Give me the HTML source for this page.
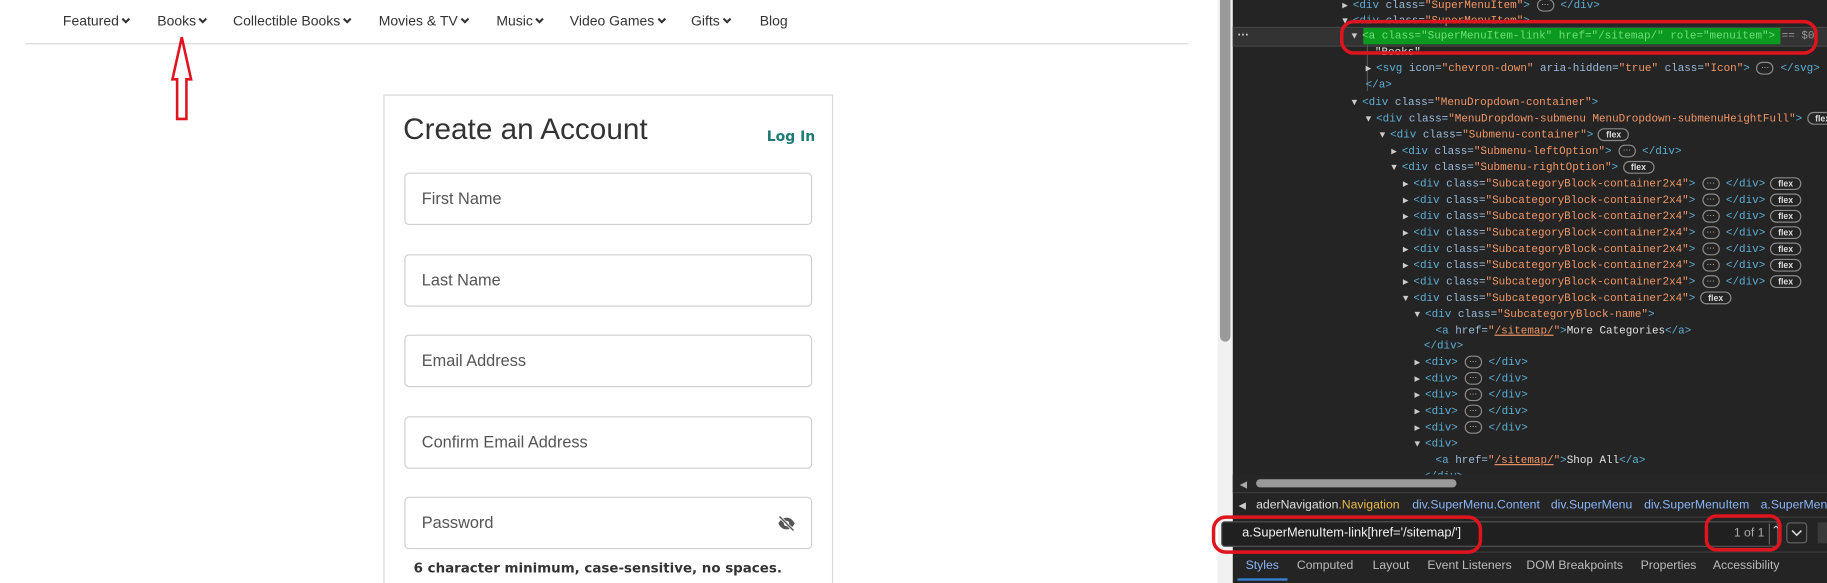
<!DOCTYPE html>
<html><head><meta charset="utf-8"><style>
html,body{margin:0;padding:0;}
body{width:1827px;height:583px;overflow:hidden;background:#fff;position:relative;}
#w{position:absolute;left:0;top:0;width:1568px;height:500px;transform:scale(1.1652,1.166);transform-origin:0 0;overflow:hidden;font-family:"Liberation Sans",sans-serif;}
.a{position:absolute;white-space:nowrap;}
.nav{font-size:12px;color:#333;top:11px;}
.nav svg{vertical-align:middle;margin-left:2px;margin-top:-2px}
.inp{position:absolute;left:347px;width:350px;height:45px;border:1px solid #cfcfcf;border-radius:4px;box-sizing:border-box;}
.inp span{position:absolute;left:14px;top:13px;font-size:14px;color:#555;}
#dt{position:absolute;left:1058px;top:0;width:510px;height:500px;background:#242424;}
.r{position:absolute;font-family:"Liberation Mono",monospace;font-size:9.4px;color:#9bbbdc;white-space:nowrap;line-height:12px;}
.t{color:#5db0d7}.n{color:#9bbbdc}.v{color:#f29766}.w{color:#e0e0e0}
.tri{display:inline-block;width:9px;color:#ccc;font-size:8px;}
.p{display:inline-block;border:1px solid #8a8a8a;border-radius:6px;font-size:7px;line-height:7px;padding:1px 3px;color:#ddd;vertical-align:1px;font-family:"Liberation Sans",sans-serif;}
.fx{display:inline-block;border:1px solid #8a8a8a;border-radius:7px;font-size:7.5px;line-height:9px;padding:0 6px;color:#ddd;margin-left:4px;font-family:"Liberation Sans",sans-serif;font-weight:bold}
.u{text-decoration:underline;color:#f29766}
.tab{position:absolute;top:479px;font-size:10.5px;color:#bbb;white-space:nowrap}
.bc{position:absolute;top:427px;font-size:10.5px;color:#8ab4f8;white-space:nowrap}
</style></head><body><div id="w">
<!-- nav -->
<div class="a nav" style="left:54px">Featured<svg width="8" height="6" viewBox="0 0 8 6"><path d="M1 1l3 3 3-3" stroke="#333" stroke-width="1.8" fill="none"/></svg></div>
<div class="a nav" style="left:135px">Books<svg width="8" height="6" viewBox="0 0 8 6"><path d="M1 1l3 3 3-3" stroke="#333" stroke-width="1.8" fill="none"/></svg></div>
<div class="a nav" style="left:200px">Collectible Books<svg width="8" height="6" viewBox="0 0 8 6"><path d="M1 1l3 3 3-3" stroke="#333" stroke-width="1.8" fill="none"/></svg></div>
<div class="a nav" style="left:325px">Movies &amp; TV<svg width="8" height="6" viewBox="0 0 8 6"><path d="M1 1l3 3 3-3" stroke="#333" stroke-width="1.8" fill="none"/></svg></div>
<div class="a nav" style="left:426px">Music<svg width="8" height="6" viewBox="0 0 8 6"><path d="M1 1l3 3 3-3" stroke="#333" stroke-width="1.8" fill="none"/></svg></div>
<div class="a nav" style="left:489px">Video Games<svg width="8" height="6" viewBox="0 0 8 6"><path d="M1 1l3 3 3-3" stroke="#333" stroke-width="1.8" fill="none"/></svg></div>
<div class="a nav" style="left:593px">Gifts<svg width="8" height="6" viewBox="0 0 8 6"><path d="M1 1l3 3 3-3" stroke="#333" stroke-width="1.8" fill="none"/></svg></div>
<div class="a nav" style="left:652px">Blog</div>
<div class="a" style="left:22px;top:37px;width:998px;height:1px;background:#d8d8d8"></div>
<svg class="a" style="left:144px;top:30px" width="24" height="76" viewBox="0 0 24 76"><path d="M12 2L20 38H16V72H8V38H4Z" fill="none" stroke="#e0141e" stroke-width="2.2"/></svg>
<!-- card -->
<div class="a" style="left:329px;top:81px;width:386px;height:430px;border:1px solid #d8d8d8;box-sizing:border-box"></div>
<div class="a" style="left:346px;top:97px;font-size:25.5px;color:#333">Create an Account</div>
<div class="a" style="left:658px;top:110px;font-size:12px;font-weight:bold;color:#1f7a74;font-family:'DejaVu Sans',sans-serif">Log In</div>
<div class="inp" style="top:148px"><span>First Name</span></div>
<div class="inp" style="top:218px"><span>Last Name</span></div>
<div class="inp" style="top:287px"><span>Email Address</span></div>
<div class="inp" style="top:357px"><span>Confirm Email Address</span></div>
<div class="inp" style="top:426px"><span>Password</span>
<svg style="position:absolute;left:319px;top:15px" width="16" height="14" viewBox="0 0 16 14"><path d="M1 7C3 3 5.5 2 8 2s5 1 7 5c-2 4-4.5 5-7 5S3 11 1 7z" fill="#555"/><circle cx="8" cy="7" r="2.3" fill="#fff"/><path d="M2 1l12 12" stroke="#fff" stroke-width="2.5"/><path d="M2 1l12 12" stroke="#555" stroke-width="1.2"/></svg></div>
<div class="a" style="left:355px;top:480px;font-size:11.5px;font-weight:bold;color:#333;font-family:'DejaVu Sans',sans-serif">6 character minimum, case-sensitive, no spaces.</div>
<div class="a" style="left:420px;top:499px;font-size:11px;color:#555">must contain at least one letter and one number or symbol of</div>
<!-- page scrollbar -->
<div class="a" style="left:1045px;top:0;width:13px;height:500px;background:#f1f1f1"></div>
<div class="a" style="left:1047px;top:0;width:9px;height:293px;background:#9a9a9a;border-radius:0 0 5px 5px"></div>
<!-- devtools -->
<div id="dt">
<div class="a" style="left:0;top:23px;width:510px;height:15px;background:#333;border-top:1px solid #444;border-bottom:1px solid #444"></div>
<div class="a" style="left:4px;top:25px;color:#ccc;font-size:10px;font-weight:bold">···</div>
<div class="a" style="left:112px;top:24px;width:358px;height:14px;background:#0b9a1f"></div>
<div class="a" style="left:115px;top:38px;width:1px;height:40px;background:#555"></div>

<div class="r" style="left:94px;top:-1px"><span class="tri">▶</span><span class="t">&lt;div </span>class=<span class="v">"SuperMenuItem"</span><span class="t">&gt;</span> <span class="p">···</span> <span class="t">&lt;/div&gt;</span></div>
<div class="r" style="left:94px;top:12px"><span class="tri">▼</span><span class="t">&lt;div </span>class=<span class="v">"SuperMenuItem"</span><span class="t">&gt;</span></div>
<div class="r" style="left:102px;top:25px"><span class="tri">▼</span><span style="color:#6fe07a">&lt;a class="SuperMenuItem-link" href="/sitemap/" role="menuitem"&gt;</span> <span style="color:#999">== $0</span></div>
<div class="r w" style="left:122px;top:39px">"Books"</div>
<div class="r" style="left:114px;top:53px"><span class="tri">▶</span><span class="t">&lt;svg </span>icon=<span class="v">"chevron-down"</span> aria-hidden=<span class="v">"true"</span> class=<span class="v">"Icon"</span><span class="t">&gt;</span> <span class="p">···</span> <span class="t">&lt;/svg&gt;</span></div>
<div class="r t" style="left:114px;top:67px">&lt;/a&gt;</div>
<div class="r" style="left:102px;top:82px"><span class="tri">▼</span><span class="t">&lt;div </span>class=<span class="v">"MenuDropdown-container"</span><span class="t">&gt;</span></div>
<div class="r" style="left:114px;top:96px"><span class="tri">▼</span><span class="t">&lt;div </span>class=<span class="v">"MenuDropdown-submenu MenuDropdown-submenuHeightFull"</span><span class="t">&gt;</span><span class="fx">flex</span></div>
<div class="r" style="left:126px;top:110px"><span class="tri">▼</span><span class="t">&lt;div </span>class=<span class="v">"Submenu-container"</span><span class="t">&gt;</span><span class="fx">flex</span></div>
<div class="r" style="left:136px;top:124px"><span class="tri">▶</span><span class="t">&lt;div </span>class=<span class="v">"Submenu-leftOption"</span><span class="t">&gt;</span> <span class="p">···</span> <span class="t">&lt;/div&gt;</span></div>
<div class="r" style="left:136px;top:138px"><span class="tri">▼</span><span class="t">&lt;div </span>class=<span class="v">"Submenu-rightOption"</span><span class="t">&gt;</span><span class="fx">flex</span></div>
<div class="r" style="left:146px;top:152px"><span class="tri">▶</span><span class="t">&lt;div </span>class=<span class="v">"SubcategoryBlock-container2x4"</span><span class="t">&gt;</span> <span class="p">···</span> <span class="t">&lt;/div&gt;</span><span class="fx">flex</span></div>
<div class="r" style="left:146px;top:166px"><span class="tri">▶</span><span class="t">&lt;div </span>class=<span class="v">"SubcategoryBlock-container2x4"</span><span class="t">&gt;</span> <span class="p">···</span> <span class="t">&lt;/div&gt;</span><span class="fx">flex</span></div>
<div class="r" style="left:146px;top:180px"><span class="tri">▶</span><span class="t">&lt;div </span>class=<span class="v">"SubcategoryBlock-container2x4"</span><span class="t">&gt;</span> <span class="p">···</span> <span class="t">&lt;/div&gt;</span><span class="fx">flex</span></div>
<div class="r" style="left:146px;top:194px"><span class="tri">▶</span><span class="t">&lt;div </span>class=<span class="v">"SubcategoryBlock-container2x4"</span><span class="t">&gt;</span> <span class="p">···</span> <span class="t">&lt;/div&gt;</span><span class="fx">flex</span></div>
<div class="r" style="left:146px;top:208px"><span class="tri">▶</span><span class="t">&lt;div </span>class=<span class="v">"SubcategoryBlock-container2x4"</span><span class="t">&gt;</span> <span class="p">···</span> <span class="t">&lt;/div&gt;</span><span class="fx">flex</span></div>
<div class="r" style="left:146px;top:222px"><span class="tri">▶</span><span class="t">&lt;div </span>class=<span class="v">"SubcategoryBlock-container2x4"</span><span class="t">&gt;</span> <span class="p">···</span> <span class="t">&lt;/div&gt;</span><span class="fx">flex</span></div>
<div class="r" style="left:146px;top:236px"><span class="tri">▶</span><span class="t">&lt;div </span>class=<span class="v">"SubcategoryBlock-container2x4"</span><span class="t">&gt;</span> <span class="p">···</span> <span class="t">&lt;/div&gt;</span><span class="fx">flex</span></div>
<div class="r" style="left:146px;top:250px"><span class="tri">▼</span><span class="t">&lt;div </span>class=<span class="v">"SubcategoryBlock-container2x4"</span><span class="t">&gt;</span><span class="fx">flex</span></div>
<div class="r" style="left:156px;top:264px"><span class="tri">▼</span><span class="t">&lt;div </span>class=<span class="v">"SubcategoryBlock-name"</span><span class="t">&gt;</span></div>
<div class="r" style="left:174px;top:278px"><span class="t">&lt;a </span>href=<span class="v">"</span><span class="u">/sitemap/</span><span class="v">"</span><span class="t">&gt;</span><span class="w">More Categories</span><span class="t">&lt;/a&gt;</span></div>
<div class="r t" style="left:164px;top:291px">&lt;/div&gt;</div>
<div class="r" style="left:156px;top:305px"><span class="tri">▶</span><span class="t">&lt;div&gt;</span> <span class="p">···</span> <span class="t">&lt;/div&gt;</span></div>
<div class="r" style="left:156px;top:319px"><span class="tri">▶</span><span class="t">&lt;div&gt;</span> <span class="p">···</span> <span class="t">&lt;/div&gt;</span></div>
<div class="r" style="left:156px;top:333px"><span class="tri">▶</span><span class="t">&lt;div&gt;</span> <span class="p">···</span> <span class="t">&lt;/div&gt;</span></div>
<div class="r" style="left:156px;top:347px"><span class="tri">▶</span><span class="t">&lt;div&gt;</span> <span class="p">···</span> <span class="t">&lt;/div&gt;</span></div>
<div class="r" style="left:156px;top:361px"><span class="tri">▶</span><span class="t">&lt;div&gt;</span> <span class="p">···</span> <span class="t">&lt;/div&gt;</span></div>
<div class="r" style="left:156px;top:375px"><span class="tri">▼</span><span class="t">&lt;div&gt;</span></div>
<div class="r" style="left:174px;top:389px"><span class="t">&lt;a </span>href=<span class="v">"</span><span class="u">/sitemap/</span><span class="v">"</span><span class="t">&gt;</span><span class="w">Shop All</span><span class="t">&lt;/a&gt;</span></div>
<div class="r t" style="left:164px;top:403px">&lt;/div&gt;</div>
<!-- h scrollbar -->
<div class="a" style="left:0;top:407px;width:510px;height:15px;background:#262626"></div>
<div class="a" style="left:6px;top:411px;font-size:8px;color:#aaa">◀</div>
<div class="a" style="left:20px;top:411px;width:172px;height:7px;border-radius:4px;background:#9a9a9a"></div>
<div class="a" style="left:0;top:422px;width:510px;height:1px;background:#3c3c3c"></div>
</div>
<div class="a" style="left:1063px;top:429px;font-size:8px;color:#ccc">◀</div>
<div class="bc" style="left:1078px;color:#ddd">aderNavigation<span style="color:#e8b84c">.Navigation</span></div>
<div class="bc" style="left:1212px">div.SuperMenu.Content</div>
<div class="bc" style="left:1331px">div.SuperMenu</div>
<div class="bc" style="left:1411px">div.SuperMenuItem</div>
<div class="bc" style="left:1511px">a.SuperMenuItem-link</div>
<div class="a" style="left:1058px;top:443px;width:510px;height:1px;background:#3c3c3c"></div>
<div class="a" style="left:1048px;top:447px;width:478px;height:22px;border:1px solid #555;border-radius:3px;box-sizing:border-box;background:#202020"></div>
<div class="a" style="left:1066px;top:451px;font-size:11px;color:#f0f0f0">a.SuperMenuItem-link[href='/sitemap/']</div>
<div class="a" style="left:1488px;top:451px;font-size:10.5px;color:#aaa">1 of 1</div>
<div class="a" style="left:1518px;top:449px;width:1px;height:18px;background:#666"></div>
<div class="a" style="left:1520px;top:450px;font-size:10px;color:#ccc">⌃</div>
<div class="a" style="left:1533px;top:448px;width:18px;height:18px;border:1px solid #666;border-radius:3px;box-sizing:border-box"></div>
<svg class="a" style="left:1537px;top:454px" width="10" height="7" viewBox="0 0 10 7"><path d="M1 1l4 4 4-4" stroke="#ddd" stroke-width="1.3" fill="none"/></svg>
<div class="a" style="left:1560px;top:448px;width:8px;height:18px;background:#3a3a3a"></div>
<div class="a" style="left:1058px;top:473px;width:510px;height:1px;background:#3c3c3c"></div>
<div class="tab" style="left:1069px;color:#8ab4f8">Styles</div>
<div class="a" style="left:1062px;top:496px;width:43px;height:2px;background:#3b82d6"></div>
<div class="tab" style="left:1113px">Computed</div>
<div class="tab" style="left:1178px">Layout</div>
<div class="tab" style="left:1225px">Event Listeners</div>
<div class="tab" style="left:1310px">DOM Breakpoints</div>
<div class="tab" style="left:1408px">Properties</div>
<div class="tab" style="left:1470px">Accessibility</div>
<!-- red ellipses -->
<div class="a" style="left:1150px;top:17px;width:410px;height:30px;border:3px solid #e0141e;border-radius:12px;box-sizing:border-box"></div>
<div class="a" style="left:1040px;top:442px;width:232px;height:33px;border:3px solid #e0141e;border-radius:12px;box-sizing:border-box"></div>
<div class="a" style="left:1463px;top:441px;width:66px;height:32px;border:3px solid #e0141e;border-radius:10px;box-sizing:border-box"></div>
</div></body></html>
